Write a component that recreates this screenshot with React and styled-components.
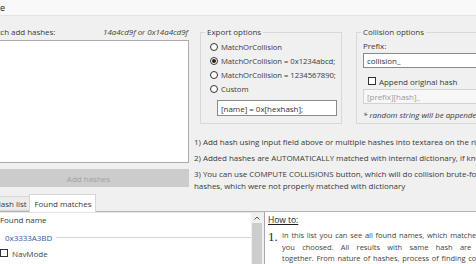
import React from 'react';
import styled, { createGlobalStyle } from 'styled-components';

const GlobalStyle = createGlobalStyle`
	html, body {
		margin: 0;
		padding: 0;
		background: #f0f0f0;
	}
	body {
		font-family: "Open Sans", "Noto Sans", sans-serif;
	}
`;

const Window = styled.div`
	width: 476px;
	height: 264px;
	overflow: hidden;
	background: #f0f0f0;
	color: #3a3a3a;
	font-size: 8px;
	letter-spacing: -0.04px;
	display: flex;
	flex-direction: column;
`;

const TitleStrip = styled.div`
	height: 15px;
	flex: none;
	background: #f9f9f9;
	border-bottom: 1px solid #e4e4e4;
	font-size: 9px;
	line-height: 15px;
	color: #222;
`;

const TopSection = styled.div`
	height: 178px;
	flex: none;
	display: flex;
	margin-left: -12px;
`;

const LeftColumn = styled.div`
	width: 201px;
	flex: none;
	padding-top: 7px;
	display: flex;
	flex-direction: column;
`;

const HeaderRow = styled.div`
	height: 17px;
	display: flex;
	align-items: center;
	justify-content: space-between;
	padding-right: 1px;
`;

const Hint = styled.span`
	font-style: italic;
	color: #444;
`;

const HashArea = styled.textarea`
	height: 123px;
	box-sizing: border-box;
	border: 1px solid #ababab;
	background: #fff;
	resize: none;
	margin: 0;
	outline: none;
`;

const AddButton = styled.button`
	margin-top: 6px;
	height: 18px;
	border: none;
	background: #cccccc;
	color: #a2a2a2;
	font-family: inherit;
	font-size: 8px;
	padding: 0;
`;

const RightColumn = styled.div`
	flex: 1;
	margin-left: 4px;
	display: flex;
	flex-direction: column;
	min-width: 0;
`;

const GroupRow = styled.div`
	display: flex;
	gap: 14px;
	margin-top: 11px;
	padding-left: 7px;
`;

const Group = styled.fieldset`
	margin: 0;
	box-sizing: border-box;
	width: ${p => p.$width}px;
	min-width: 0;
	height: 97px;
	flex: none;
	border: 1px solid #d8d8d8;
	border-radius: 0;
	padding: 3px ${p => p.$pad}px 0;
	display: flex;
	flex-direction: column;
`;

const Legend = styled.legend`
	padding: 0 2px;
	margin-left: ${p => p.$offset}px;
	line-height: 10px;
	color: #3a3a3a;
`;

const OptionRow = styled.label`
	height: 14px;
	display: flex;
	align-items: center;
	gap: 3px;
	font-size: 7.7px;
	white-space: nowrap;
`;

const Radio = styled.span`
	width: 8px;
	height: 8px;
	box-sizing: border-box;
	border: 1px solid #333;
	border-radius: 50%;
	background: #fff;
	flex: none;
	display: grid;
	place-items: center;
	&::after {
		content: '';
		width: 4px;
		height: 4px;
		border-radius: 50%;
		background: ${p => (p.$checked ? '#1e1e1e' : 'transparent')};
	}
`;

const TextInput = styled.div`
	height: ${p => p.$height}px;
	box-sizing: border-box;
	margin-top: ${p => p.$top}px;
	margin-left: ${p => p.$indent || 0}px;
	width: ${p => (p.$width ? `${p.$width}px` : 'auto')};
	border: 1px solid ${p => (p.$disabled ? '#d2d2d2' : '#8a8a8a')};
	background: ${p => (p.$disabled ? '#f7f7f7' : '#fff')};
	color: ${p => (p.$disabled ? '#9a9a9a' : '#333')};
	padding-left: 3px;
	display: flex;
	align-items: center;
	white-space: nowrap;
	overflow: hidden;
`;

const FieldLabel = styled.div`
	height: 12px;
	line-height: 12px;
`;

const CheckRow = styled.label`
	height: 14px;
	margin-top: 6px;
	margin-left: 5px;
	display: flex;
	align-items: center;
	gap: 3px;
	white-space: nowrap;
`;

const Checkbox = styled.span`
	width: 8px;
	height: 8px;
	box-sizing: border-box;
	border: 1px solid #333;
	background: #fff;
	flex: none;
`;

const Note = styled.div`
	margin-top: 5px;
	height: 12px;
	line-height: 12px;
	font-style: italic;
	font-size: 8px;
	white-space: nowrap;
`;

const Instructions = styled.div`
	margin-top: 12px;
	padding-left: 1px;
	white-space: nowrap;
`;

const Step = styled.p`
	margin: 0 0 4px;
	line-height: 12px;
`;

const TabStrip = styled.div`
	height: 17px;
	flex: none;
	display: flex;
	align-items: flex-end;
	margin-left: -9px;
	position: relative;
	z-index: 1;
`;

const Tab = styled.div`
	height: ${p => (p.$active ? 18 : 15)}px;
	box-sizing: border-box;
	padding: 0 ${p => (p.$active ? 4 : 3)}px;
	display: flex;
	align-items: center;
	background: ${p => (p.$active ? '#fff' : '#ececec')};
	border: 1px solid #d6d6d6;
	border-bottom: ${p => (p.$active ? 'none' : '1px solid #d6d6d6')};
	margin-bottom: ${p => (p.$active ? '-1px' : '0')};
	margin-left: ${p => (p.$active ? '-1px' : '0')};
	white-space: nowrap;
`;

const BottomPanel = styled.div`
	flex: 1;
	display: flex;
	border-top: 1px solid #b5b5b5;
	background: #fff;
	min-height: 0;
`;

const MatchList = styled.div`
	width: 255px;
	flex: none;
	margin-left: -4px;
	background: #fff;
	border-top: 1px solid #e6e6e6;
`;

const ColumnHeader = styled.div`
	height: 14px;
	line-height: 14px;
	padding-left: 4px;
`;

const GroupHeader = styled.div`
	height: 16px;
	margin-top: 2px;
	display: flex;
	align-items: center;
	gap: 4px;
	padding-left: 9px;
	color: #2f5ca8;
	&::after {
		content: '';
		flex: 1;
		height: 1px;
		background: #cfd6e2;
	}
`;

const ListItem = styled.div`
	height: 16px;
	display: flex;
	align-items: center;
	gap: 4px;
	padding-left: 4px;
	color: #444;
`;

const ScrollBar = styled.div`
	width: 12px;
	flex: none;
	background: #f0f0f0;
	display: flex;
	flex-direction: column;
	align-items: center;
	border-top: 1px solid #e6e6e6;
`;

const ScrollArrow = styled.div`
	height: 10px;
	display: flex;
	align-items: center;
	justify-content: center;
`;

const ScrollThumb = styled.div`
	width: 10px;
	flex: 1;
	background: #cdcdcd;
`;

const Splitter = styled.div`
	width: 1px;
	flex: none;
	background: #f0f0f0;
	border-right: 1px solid #a8a8a8;
`;

const HowTo = styled.div`
	flex: 1;
	padding: 1px 0 0 3px;
	background: #fff;
	white-space: nowrap;
	overflow: hidden;
`;

const HowToTitle = styled.div`
	font-size: 8.5px;
	line-height: 13px;
	text-decoration: underline;
	color: #1e1e1e;
`;

const HowToItem = styled.div`
	display: flex;
	margin-top: 4px;
`;

const ItemNumber = styled.span`
	width: 14px;
	flex: none;
	font-family: "Liberation Serif", serif;
	font-size: 13px;
	line-height: 13px;
	color: #2a2a2a;
`;

const ItemText = styled.div`
	width: 226px;
	flex: none;
	font-size: 7.5px;
	color: #444;
`;

const TextLine = styled.div`
	line-height: 11.5px;
	white-space: nowrap;
	text-align: justify;
	text-align-last: justify;
	overflow: hidden;
`;

const ChevronUp = () => (
	<svg width="6" height="4" viewBox="0 0 6 4">
		<path d="M0.5 3.5 L3 1 L5.5 3.5" fill="none" stroke="#555" strokeWidth="1" />
	</svg>
);

const exportOptions = [
	{ text: 'MatchOrCollision', checked: false },
	{ text: 'MatchOrCollision = 0x1234abcd;', checked: true },
	{ text: 'MatchOrCollision = 1234567890;', checked: false },
	{ text: 'Custom', checked: false }
];

const steps = [
	'1) Add hash using input field above or multiple hashes into textarea on the right side',
	'2) Added hashes are AUTOMATICALLY matched with internal dictionary, if known'
];

export default function App() {
	return (
		<Window>
			<GlobalStyle />
			<TitleStrip>e</TitleStrip>
			<TopSection>
				<LeftColumn>
					<HeaderRow>
						<span>Batch add hashes:</span>
						<Hint>14a4cd9f or 0x14a4cd9f</Hint>
					</HeaderRow>
					<HashArea />
					<AddButton disabled>Add hashes</AddButton>
				</LeftColumn>
				<RightColumn>
					<GroupRow>
						<Group $width={142} $pad={9}>
							<Legend $offset={-5}>Export options</Legend>
							{exportOptions.map(opt => (
								<OptionRow key={opt.text}>
									<Radio $checked={opt.checked} />
									{opt.text}
								</OptionRow>
							))}
							<TextInput $height={16} $top={4} $indent={7} $width={120}>
								[name] = 0x[hexhash];
							</TextInput>
						</Group>
						<Group $width={170} $pad={6}>
							<Legend $offset={-2}>Collision options</Legend>
							<FieldLabel>Prefix:</FieldLabel>
							<TextInput $height={15} $top={1}>collision_</TextInput>
							<CheckRow>
								<Checkbox />
								Append original hash
							</CheckRow>
							<TextInput $height={15} $top={1} $disabled>
								[prefix][hash]_
							</TextInput>
							<Note>* random string will be appended</Note>
						</Group>
					</GroupRow>
					<Instructions>
						{steps.map(s => (
							<Step key={s}>{s}</Step>
						))}
						<Step>
							3) You can use COMPUTE COLLISIONS button, which will do collision brute-force on all
							<br />
							hashes, which were not properly matched with dictionary
						</Step>
					</Instructions>
				</RightColumn>
			</TopSection>
			<TabStrip>
				<Tab>Hash list</Tab>
				<Tab $active>Found matches</Tab>
			</TabStrip>
			<BottomPanel>
				<MatchList>
					<ColumnHeader>Found name</ColumnHeader>
					<GroupHeader>0x3333A3BD</GroupHeader>
					<ListItem>
						<Checkbox />
						NavMode
					</ListItem>
				</MatchList>
				<ScrollBar>
					<ScrollArrow>
						<ChevronUp />
					</ScrollArrow>
					<ScrollThumb />
				</ScrollBar>
				<Splitter />
				<HowTo>
					<HowToTitle>How to:</HowToTitle>
					<HowToItem>
						<ItemNumber>1.</ItemNumber>
						<ItemText>
							<TextLine>In this list you can see all found names, which matched hashes</TextLine>
							<TextLine>you choosed. All results with same hash are grouped</TextLine>
							<TextLine>together. From nature of hashes, process of finding collisions is</TextLine>
						</ItemText>
					</HowToItem>
				</HowTo>
			</BottomPanel>
		</Window>
	);
}
